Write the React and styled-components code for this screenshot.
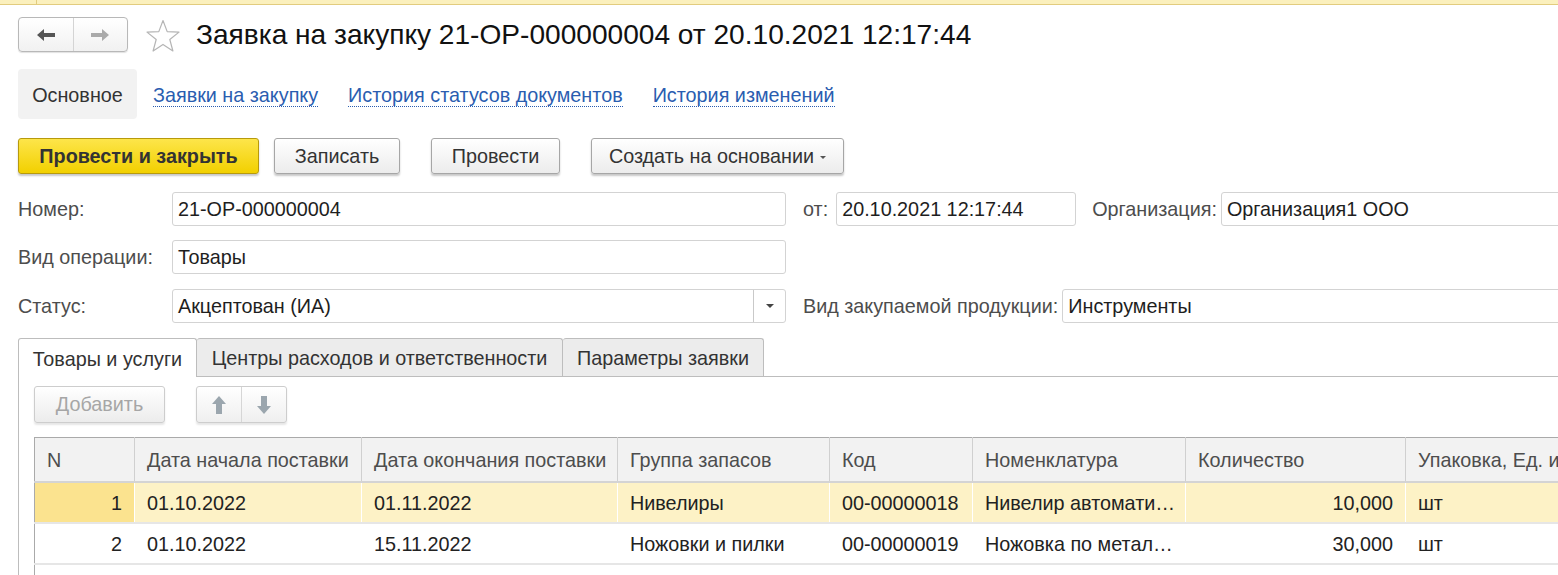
import styled, { createGlobalStyle } from "styled-components";

const GlobalStyle = createGlobalStyle`
  html, body {
    margin: 0;
    padding: 0;
    background: #fff;
    overflow: hidden;
  }
  body {
    font-family: "Liberation Sans", Arial, sans-serif;
    font-size: 19.8px;
    color: #333;
  }
`;

const columns = [
  { title: "N", width: 100 },
  { title: "Дата начала поставки", width: 227 },
  { title: "Дата окончания поставки", width: 256 },
  { title: "Группа запасов", width: 212 },
  { title: "Код", width: 143 },
  { title: "Номенклатура", width: 213 },
  { title: "Количество", width: 220 },
  { title: "Упаковка, Ед. изм.", width: 200 },
];

const rows = [
  ["1", "01.10.2022", "01.11.2022", "Нивелиры", "00-00000018", "Нивелир автоматический", "10,000", "шт"],
  ["2", "01.10.2022", "15.11.2022", "Ножовки и пилки", "00-00000019", "Ножовка по металлу ручная", "30,000", "шт"],
];

function ArrowIcon({ dir, color }) {
  return (
    <svg width="20" height="14" viewBox="0 0 20 14" style={{ transform: dir === "right" ? "scaleX(-1)" : "none" }}>
      <path d="M1 7 L8 1 L8 5 L19 5 L19 9 L8 9 L8 13 Z" fill={color} />
    </svg>
  );
}

function VArrow({ dir }) {
  return (
    <svg width="16" height="20" viewBox="0 0 16 20" style={{ transform: dir === "down" ? "scaleY(-1)" : "none" }}>
      <path d="M8 1 L15 9 L11 9 L11 19 L5 19 L5 9 L1 9 Z" fill="#9ba6ae" />
    </svg>
  );
}

export default function App() {
  return (
    <Page>
      <GlobalStyle />
      <TopStrip>
        <TopStripCell />
      </TopStrip>

      <Header>
        <NavGroup>
          <NavButton>
            <ArrowIcon dir="left" color="#555" />
          </NavButton>
          <NavButton>
            <ArrowIcon dir="right" color="#aaa" />
          </NavButton>
        </NavGroup>
        <Star viewBox="0 0 36 34" width="36" height="34">
          <path
            d="M18 1.5 L22.2 12.6 L34 13.1 L24.8 20.5 L27.9 32 L18 25.4 L8.1 32 L11.2 20.5 L2 13.1 L13.8 12.6 Z"
            fill="none"
            stroke="#b5b5b5"
            strokeWidth="1.2"
            strokeLinejoin="round"
          />
        </Star>
        <Title>Заявка на закупку 21-OP-000000004 от 20.10.2021 12:17:44</Title>
      </Header>

      <Sections>
        <MainSection>Основное</MainSection>
        <SectionLink>Заявки на закупку</SectionLink>
        <SectionLink>История статусов документов</SectionLink>
        <SectionLink>История изменений</SectionLink>
      </Sections>

      <CommandBar>
        <Button $primary $width={241}>Провести и закрыть</Button>
        <Button $width={126}>Записать</Button>
        <Button $width={129} $gap={31}>Провести</Button>
        <Button $width={253} $gap={31}>
          Создать на основании <Caret />
        </Button>
      </CommandBar>

      <Form>
        <FieldRow>
          <Label $width={154}>Номер:</Label>
          <Input $width={614}>21-OP-000000004</Input>
          <Label $gap={17} $after={8}>от:</Label>
          <Input $width={240}>20.10.2021 12:17:44</Input>
          <Label $gap={16} $after={4}>Организация:</Label>
          <Input $width={360}>Организация1 ООО</Input>
        </FieldRow>
        <FieldRow>
          <Label $width={154}>Вид операции:</Label>
          <Input $width={614}>Товары</Input>
        </FieldRow>
        <FieldRow>
          <Label $width={154}>Статус:</Label>
          <Input $width={614}>
            <SelectText>Акцептован (ИА)</SelectText>
            <SelectButton>
              <SmallTriangle />
            </SelectButton>
          </Input>
          <Label $gap={17} $after={4}>Вид закупаемой продукции:</Label>
          <Input $width={520}>Инструменты</Input>
        </FieldRow>
      </Form>

      <TabStrip>
        <Tab $active $width={179}>Товары и услуги</Tab>
        <Tab $width={366}>Центры расходов и ответственности</Tab>
        <Tab $width={201}>Параметры заявки</Tab>
      </TabStrip>

      <Panel>
        <PanelBar>
          <Button $width={131} $height={37} $disabled>Добавить</Button>
          <ArrowGroup>
            <ArrowButton>
              <VArrow dir="up" />
            </ArrowButton>
            <ArrowButton>
              <VArrow dir="down" />
            </ArrowButton>
          </ArrowGroup>
        </PanelBar>

        <Table>
          <colgroup>
            {columns.map((c) => (
              <col key={c.title} style={{ width: c.width }} />
            ))}
          </colgroup>
          <thead>
            <tr>
              {columns.map((c) => (
                <Th key={c.title}>{c.title}</Th>
              ))}
            </tr>
          </thead>
          <tbody>
            {rows.map((r, i) => (
              <Tr key={r[0]} $selected={i === 0}>
                {r.map((cell, j) => (
                  <Td key={j} $right={j === 0 || j === 6} $mark={i === 0 && j === 0}>
                    {cell}
                  </Td>
                ))}
              </Tr>
            ))}
            <Tr>
              {columns.map((c) => (
                <Td key={c.title} />
              ))}
            </Tr>
          </tbody>
        </Table>
      </Panel>
    </Page>
  );
}

const Page = styled.div`
  width: 1558px;
  height: 575px;
  overflow: hidden;
`;

const TopStrip = styled.div`
  height: 4px;
  background: #fbf0bd;
  border-bottom: 1px solid #e2cc7e;
`;

const TopStripCell = styled.div`
  width: 36px;
  height: 100%;
  border-right: 1px solid #e2cc7e;
`;

const Header = styled.div`
  display: flex;
  align-items: center;
  padding: 12px 0 0 18px;
  height: 35px;
`;

const NavGroup = styled.div`
  display: flex;
  width: 110px;
  height: 35px;
  box-sizing: border-box;
  border: 1px solid #b8b8b8;
  border-radius: 4px;
  background: linear-gradient(#fff, #f1f1f1);
  box-shadow: 0 1px 1px rgba(0, 0, 0, 0.12);
`;

const NavButton = styled.div`
  flex: 1;
  display: flex;
  align-items: center;
  justify-content: center;
  & + & {
    border-left: 1px solid #d4d4d4;
  }
`;

const Star = styled.svg`
  margin-left: 17px;
  margin-top: 2px;
`;

const Title = styled.h1`
  margin: 0 0 0 15px;
  font-size: 28.1px;
  font-weight: normal;
  color: #111;
  white-space: nowrap;
`;

const Sections = styled.div`
  display: flex;
  align-items: center;
  margin: 17px 0 0 18px;
  height: 50px;
`;

const MainSection = styled.div`
  height: 50px;
  width: 119px;
  box-sizing: border-box;
  display: flex;
  align-items: center;
  justify-content: center;
  padding-top: 2px;
  background: #f2f2f2;
  border-radius: 4px;
  color: #333;
`;

const SectionLink = styled.a`
  margin: 4px 14px 0 16px;
  color: #2a5db0;
  text-decoration: none;
  border-bottom: 1px dotted #2a5db0;
  line-height: 21px;
  white-space: nowrap;
`;

const CommandBar = styled.div`
  display: flex;
  gap: 15px;
  margin: 19px 0 0 18px;
`;

const Button = styled.div`
  width: ${(p) => p.$width}px;
  height: ${(p) => p.$height || 36}px;
  margin-left: ${(p) => (p.$gap ? p.$gap - 15 : 0)}px;
  box-sizing: border-box;
  display: flex;
  align-items: center;
  justify-content: center;
  gap: 6px;
  border-radius: 3px;
  white-space: nowrap;
  border: 1px solid ${(p) => (p.$primary ? "#b79a0c" : p.$disabled ? "#cdcdcd" : "#a6a6a6")};
  background: ${(p) =>
    p.$primary ? "linear-gradient(#fde54a, #f2d000)" : "linear-gradient(#ffffff, #ececec)"};
  box-shadow: 0 2px 2px ${(p) => (p.$disabled ? "rgba(0, 0, 0, 0.1)" : "rgba(0, 0, 0, 0.22)")};
  color: ${(p) => (p.$disabled ? "#a6a6a6" : "#333")};
  font-weight: ${(p) => (p.$primary ? "bold" : "normal")};
`;

const Caret = styled.span`
  width: 0;
  height: 0;
  margin-top: 2px;
  border-left: 3px solid transparent;
  border-right: 3px solid transparent;
  border-top: 3px solid #555;
`;

const Form = styled.div`
  display: flex;
  flex-direction: column;
  gap: 14px;
  margin: 18px 0 0 18px;
`;

const FieldRow = styled.div`
  display: flex;
  align-items: center;
  height: 34px;
  &:nth-child(3) {
    margin-top: 1px;
  }
`;

const Label = styled.div`
  ${(p) => (p.$width ? `width: ${p.$width}px;` : "")}
  margin-left: ${(p) => p.$gap || 0}px;
  margin-right: ${(p) => p.$after || 0}px;
  flex-shrink: 0;
  color: #4d4d4d;
  white-space: nowrap;
`;

const Input = styled.div`
  width: ${(p) => p.$width}px;
  height: 34px;
  flex-shrink: 0;
  box-sizing: border-box;
  display: flex;
  align-items: center;
  padding-left: 5px;
  border: 1px solid #d3d3d3;
  border-radius: 3px;
  background: #fff;
  color: #1e1e1e;
  white-space: nowrap;
  overflow: hidden;
`;

const SelectText = styled.span`
  flex: 1;
`;

const SelectButton = styled.div`
  width: 31px;
  height: 100%;
  display: flex;
  align-items: center;
  justify-content: center;
  border-left: 1px solid #c9c9c9;
`;

const SmallTriangle = styled.span`
  width: 0;
  height: 0;
  border-left: 4px solid transparent;
  border-right: 4px solid transparent;
  border-top: 4px solid #444;
`;

const TabStrip = styled.div`
  display: flex;
  margin: 15px 0 0 18px;
  height: 39px;
  box-sizing: border-box;
  border-bottom: 1px solid #bdbdbd;
`;

const Tab = styled.div`
  width: ${(p) => p.$width}px;
  height: ${(p) => (p.$active ? 39 : 38)}px;
  box-sizing: border-box;
  display: flex;
  align-items: center;
  justify-content: center;
  padding-top: 2px;
  border: 1px solid #bdbdbd;
  border-bottom: none;
  border-left: ${(p) => (p.$active ? "1px solid #bdbdbd" : "none")};
  border-radius: 3px 3px 0 0;
  background: ${(p) => (p.$active ? "#fff" : "#ececec")};
  color: #333;
  white-space: nowrap;
  position: relative;
  z-index: ${(p) => (p.$active ? 1 : 0)};
`;

const Panel = styled.div`
  margin-left: 18px;
  border-left: 1px solid #bdbdbd;
  padding: 9px 0 0 15px;
  height: 300px;
`;

const PanelBar = styled.div`
  display: flex;
  gap: 31px;
`;

const ArrowGroup = styled.div`
  display: flex;
  width: 91px;
  height: 37px;
  box-sizing: border-box;
  border: 1px solid #cdcdcd;
  border-radius: 3px;
  background: linear-gradient(#ffffff, #efefef);
  box-shadow: 0 2px 2px rgba(0, 0, 0, 0.1);
`;

const ArrowButton = styled.div`
  flex: 1;
  display: flex;
  align-items: center;
  justify-content: center;
  & + & {
    border-left: 1px solid #d6d6d6;
  }
`;

const Table = styled.table`
  margin-top: 14px;
  border-collapse: collapse;
  table-layout: fixed;
  width: 1571px;
  border-top: 1px solid #aaa;
  border-left: 1px solid #aaa;
`;

const Th = styled.th`
  height: 44px;
  box-sizing: border-box;
  padding: 3px 8px 0 12px;
  text-align: left;
  font-weight: normal;
  color: #4d4d4d;
  background: #f2f2f2;
  border-right: 1px solid #d0d0d0;
  border-bottom: 2px solid #d4d4d4;
  white-space: nowrap;
  overflow: hidden;
`;

const Tr = styled.tr`
  background: ${(p) => (p.$selected ? "#fdf2c6" : "#fff")};
`;

const Td = styled.td`
  height: 41px;
  box-sizing: border-box;
  padding: 3px 12px 0 12px;
  text-align: ${(p) => (p.$right ? "right" : "left")};
  color: #222;
  border-right: 1px solid #fff;
  border-bottom: 2px solid #e6e6e6;
  background: ${(p) => (p.$mark ? "#fbe38f" : "transparent")};
  white-space: nowrap;
  overflow: hidden;
  text-overflow: ellipsis;
  &:not(:first-child):not(:nth-child(7)) {
    padding-right: 6px;
  }
`;
